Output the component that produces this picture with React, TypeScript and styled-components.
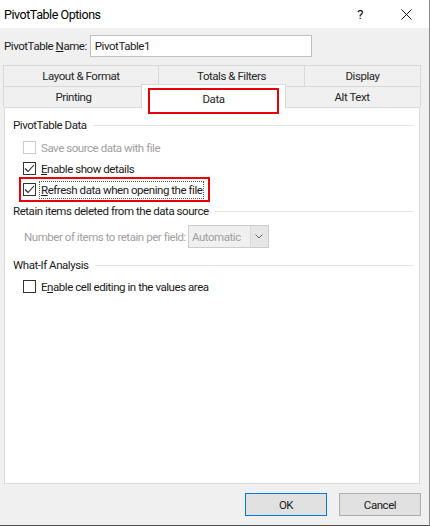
import styled, { createGlobalStyle } from 'styled-components';

const GlobalStyle = createGlobalStyle`
  html, body {
    margin: 0;
    padding: 0;
    background: #f0f0f0;
  }
  * {
    box-sizing: border-box;
  }
`;

const Window = styled.div`
  width: 430px;
  height: 526px;
  display: flex;
  flex-direction: column;
  background: #f0f0f0;
  border-right: 1px solid #8a8a8a;
  border-bottom: 1px solid #4d4d4d;
  font-family: Roboto, "Noto Sans", sans-serif;
  font-size: 11.5px;
  letter-spacing: -0.45px;
  color: #1a1a1a;
`;

const TitleBar = styled.div`
  height: 28px;
  flex-shrink: 0;
  display: flex;
  align-items: center;
  background: #ffffff;
  padding-left: 4px;
  font-size: 12.5px;
  color: #000;
`;

const Title = styled.div`
  flex: 1;
`;

const TitleButton = styled.div`
  width: 46px;
  height: 28px;
  display: flex;
  align-items: center;
  justify-content: center;
  font-size: 13px;
`;

const NameRow = styled.div`
  display: flex;
  align-items: center;
  gap: 3px;
  padding: 7px 0 0 4px;
`;

const NameInput = styled.div`
  width: 222px;
  height: 22px;
  background: #fff;
  border: 1px solid #bfbfbf;
  padding-left: 4px;
  display: flex;
  align-items: center;
`;

const Tabs = styled.div`
  margin: 8px 0 0 4px;
  width: 416px;
`;

const TabRow = styled.div<{ cols: string }>`
  display: grid;
  grid-template-columns: ${({ cols }) => cols};
  height: 21px;
`;

const Tab = styled.div<{ selected?: boolean }>`
  position: relative;
  display: flex;
  align-items: center;
  justify-content: center;
  border: 1px solid #d9d9d9;
  border-bottom: none;
  margin-left: -1px;
  background: ${({ selected }) => (selected ? '#ffffff' : '#f0f0f0')};
  color: #262626;
  ${({ selected }) =>
    selected &&
    `
    margin: -2px -2px -1px -3px;
    z-index: 2;
    padding-bottom: 1px;
  `}
`;

const RedMark = styled.div`
  position: absolute;
  left: 6px;
  right: 6px;
  top: 3px;
  bottom: -6px;
  border: 2px solid #e8000b;
  display: flex;
  align-items: center;
  justify-content: center;
  padding-bottom: 5px;
`;

const Panel = styled.div`
  margin-left: 4px;
  width: 416px;
  height: 377px;
  background: #ffffff;
  border: 1px solid #d9d9d9;
  padding: 9px 6px 0 8px;
  display: flex;
  flex-direction: column;
`;

const GroupHeading = styled.div<{ gapTop?: number }>`
  display: flex;
  align-items: center;
  height: 16px;
  margin-top: ${({ gapTop }) => gapTop ?? 0}px;
  color: #1a1a1a;

  &::after {
    content: '';
    flex: 1;
    height: 1px;
    margin-left: 6px;
    background: #e3e3e3;
  }
`;

const CheckRow = styled.div<{ highlight?: boolean; gapTop?: number }>`
  align-self: flex-start;
  display: flex;
  align-items: center;
  gap: 3px;
  height: 21px;
  margin: ${({ gapTop }) => gapTop ?? 0}px 0 0 8px;
  padding: 0 4px 0 2px;
  outline: ${({ highlight }) => (highlight ? '2px solid #e8000b' : 'none')};
`;

const Box = styled.div<{ disabled?: boolean }>`
  width: 13px;
  height: 13px;
  border: 1px solid ${({ disabled }) => (disabled ? '#cccccc' : '#333333')};
  background: #fff;
  display: flex;
  align-items: center;
  justify-content: center;
`;

const Label = styled.span<{ disabled?: boolean; focused?: boolean }>`
  color: ${({ disabled }) => (disabled ? '#a0a0a0' : '#1a1a1a')};
  border: 1px ${({ focused }) => (focused ? 'dotted #555' : 'solid transparent')};
  padding: 0 1px;
  line-height: 16px;
`;

const RetainRow = styled.div`
  display: flex;
  align-items: center;
  gap: 2px;
  margin: 6px 0 0 11px;
  color: #a0a0a0;
`;

const Select = styled.div`
  width: 81px;
  height: 23px;
  display: flex;
  border: 1px solid #cccccc;
  background: #f0f0f0;
`;

const SelectValue = styled.div`
  flex: 1;
  display: flex;
  align-items: center;
  padding-left: 3px;
  color: #a0a0a0;
`;

const SelectArrow = styled.div`
  width: 18px;
  display: flex;
  align-items: center;
  justify-content: center;
  border-left: 1px solid #dadada;
  background: #e6e6e6;
`;

const Footer = styled.div`
  display: flex;
  justify-content: flex-end;
  gap: 12px;
  padding: 9px 8px 0 0;
`;

const Button = styled.div<{ primary?: boolean }>`
  width: 82px;
  height: 23px;
  display: flex;
  align-items: center;
  justify-content: center;
  background: #e1e1e1;
  border: 1px solid ${({ primary }) => (primary ? '#0078d7' : '#adadad')};
  color: #1a1a1a;
`;

const Check = () => (
  <svg width="11" height="9" viewBox="0 0 11 9">
    <path d="M1 4.5 L4 7.5 L10 1" fill="none" stroke="#222" strokeWidth="1.1" />
  </svg>
);

const CloseIcon = () => (
  <svg width="11" height="11" viewBox="0 0 11 11">
    <path d="M0.5 0.5 L10.5 10.5 M10.5 0.5 L0.5 10.5" stroke="#111" strokeWidth="1" />
  </svg>
);

const Chevron = () => (
  <svg width="8" height="5" viewBox="0 0 8 5">
    <path d="M0.5 0.5 L4 4 L7.5 0.5" fill="none" stroke="#666" strokeWidth="1" />
  </svg>
);

export default function App() {
  return (
    <>
      <GlobalStyle />
      <Window>
        <TitleBar>
          <Title>PivotTable Options</Title>
          <TitleButton>?</TitleButton>
          <TitleButton>
            <CloseIcon />
          </TitleButton>
        </TitleBar>

        <NameRow>
          <span>
            PivotTable <u>N</u>ame:
          </span>
          <NameInput>PivotTable1</NameInput>
        </NameRow>

        <Tabs>
          <TabRow cols="155px 146px 116px">
            <Tab>Layout &amp; Format</Tab>
            <Tab>Totals &amp; Filters</Tab>
            <Tab>Display</Tab>
          </TabRow>
          <TabRow cols="140px 140px 137px">
            <Tab>Printing</Tab>
            <Tab selected>
              <RedMark>Data</RedMark>
            </Tab>
            <Tab>Alt Text</Tab>
          </TabRow>
        </Tabs>

        <Panel>
          <GroupHeading>PivotTable Data</GroupHeading>
          <CheckRow gapTop={4}>
            <Box disabled />
            <Label disabled>Save source data with file</Label>
          </CheckRow>
          <CheckRow>
            <Box>
              <Check />
            </Box>
            <Label>
              <u>E</u>nable show details
            </Label>
          </CheckRow>
          <CheckRow highlight>
            <Box>
              <Check />
            </Box>
            <Label focused>
              <u>R</u>efresh data when opening the file
            </Label>
          </CheckRow>

          <GroupHeading gapTop={3}>Retain items deleted from the data source</GroupHeading>
          <RetainRow>
            <span>Number of items to retain per field:</span>
            <Select>
              <SelectValue>Automatic</SelectValue>
              <SelectArrow>
                <Chevron />
              </SelectArrow>
            </Select>
          </RetainRow>

          <GroupHeading gapTop={9}>What-If Analysis</GroupHeading>
          <CheckRow gapTop={3}>
            <Box />
            <Label>
              E<u>n</u>able cell editing in the values area
            </Label>
          </CheckRow>
        </Panel>

        <Footer>
          <Button primary>OK</Button>
          <Button>Cancel</Button>
        </Footer>
      </Window>
    </>
  );
}
